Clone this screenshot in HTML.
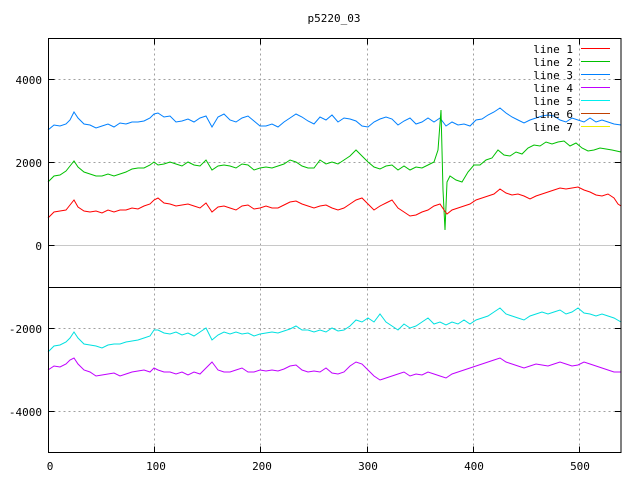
<!DOCTYPE html>
<html><head><meta charset="utf-8"><style>
html,body{margin:0;padding:0;background:#fff}
svg{display:block}
text{font-family:"DejaVu Sans Mono","Liberation Mono",monospace;font-size:11px;fill:#000}
</style></head><body>
<svg width="640" height="480" viewBox="0 0 640 480" xmlns="http://www.w3.org/2000/svg">
<rect width="640" height="480" fill="#fff"/>
<text x="334" y="22" text-anchor="middle">p5220_03</text>
<g stroke="#a0a0a0" stroke-width="1" stroke-dasharray="2,3" fill="none">
<path d="M48.5 79.5H621M48.5 162.5H621M48.5 328.5H621M48.5 411.5H621"/>
<path d="M154.5 38.5V452.5M260.5 38.5V452.5M367.5 38.5V452.5M473.5 38.5V452.5M579.5 38.5V452.5"/>
</g>
<path d="M48.5 245.5H621" stroke="#c8c8c8" stroke-width="1"/>
<path d="M48.5 287.5H621" stroke="#000" stroke-width="1"/>
<g fill="none" stroke-width="1">
<polyline stroke="#0080ff" points="48,130 54,125 60,126 66,124 70,120 74,112 78,118 84,124 90,125 96,128 102,126 108,124 114,127 120,123 126,124 132,122 138,122 144,121 150,118 154,114 158,113 164,117 170,116 176,122 182,121 188,119 194,122 200,118 206,116 212,127 218,117 224,114 230,120 236,122 242,118 248,116 254,121 260,126 266,126 272,124 278,127 284,122 290,118 296,114 302,117 308,121 314,124 320,117 326,120 332,115 338,122 344,118 350,119 356,121 362,126 368,127 374,122 380,119 386,117 392,119 398,125 404,121 410,118 416,124 422,122 428,118 434,122 440,118 446,126 452,122 458,125 464,124 470,126 476,120 482,119 488,115 494,112 500,108 506,113 512,117 518,120 524,123 530,120 536,118 542,116 548,115 554,116 560,120 566,122 572,118 578,120 584,122 590,118 596,122 602,120 608,122 614,124 621,125"/>
<polyline stroke="#00c000" points="48,182 54,176 60,175 66,171 70,166 74,161 78,167 84,172 90,174 96,176 102,176 108,174 114,176 120,174 126,172 132,169 138,168 144,168 150,165 154,162 158,165 164,164 170,162 176,164 182,166 188,162 194,165 200,166 206,160 212,170 218,166 224,165 230,166 236,168 242,164 248,165 254,170 260,168 266,167 272,168 278,166 284,164 290,160 296,162 302,166 308,168 314,168 320,160 326,164 332,162 338,164 344,160 350,156 356,150 362,156 368,162 374,167 380,169 386,166 392,165 398,170 404,166 410,170 416,167 422,168 428,165 434,162 438,150 441,110 443,190 445,230 447,182 450,176 456,180 462,182 468,172 474,165 480,165 486,160 492,158 498,150 504,155 510,156 516,152 522,154 528,148 534,145 540,146 546,142 552,144 558,142 564,141 570,146 576,143 582,148 588,151 594,150 600,148 606,149 612,150 621,152"/>
<polyline stroke="#ff0000" points="48,218 54,212 60,211 66,210 70,205 74,200 78,207 84,211 90,212 96,211 102,213 108,210 114,212 120,210 126,210 132,208 138,209 144,206 150,204 154,200 158,198 164,203 170,204 176,206 182,205 188,204 194,206 200,208 206,203 212,212 218,207 224,206 230,208 236,210 242,206 248,205 254,209 260,208 266,206 272,208 278,208 284,205 290,202 296,201 302,204 308,206 314,208 320,206 326,205 332,208 338,210 344,208 350,204 356,200 362,198 368,204 374,210 380,206 386,203 392,200 398,208 404,212 410,216 416,215 422,212 428,210 434,206 440,204 444,210 447,214 452,210 458,208 464,206 470,204 476,200 482,198 488,196 494,194 500,189 506,193 512,195 518,194 524,196 530,199 536,196 542,194 548,192 554,190 560,188 566,189 572,188 578,187 584,190 590,192 596,195 602,196 608,194 614,198 618,204 621,206"/>
<polyline stroke="#00e0e0" points="48,352 54,346 60,345 66,342 70,338 74,332 78,338 84,344 90,345 96,346 102,348 108,345 114,344 120,344 126,342 132,341 138,340 144,338 150,336 154,330 158,330 164,333 170,334 176,332 182,335 188,333 194,336 200,332 206,328 212,340 218,335 224,332 230,334 236,332 242,334 248,333 254,336 260,334 266,333 272,332 278,333 284,331 290,329 296,326 302,330 308,330 314,332 320,330 326,332 332,328 338,331 344,330 350,326 356,320 362,322 368,318 374,322 380,314 386,322 392,326 398,330 404,324 410,328 416,326 422,322 428,318 434,324 440,322 446,325 452,322 458,324 464,320 470,324 476,320 482,318 488,316 494,312 500,308 506,314 512,316 518,318 524,320 530,316 536,314 542,312 548,314 554,312 560,310 566,314 572,312 578,308 584,313 590,314 596,316 602,314 608,316 614,318 621,322"/>
<polyline stroke="#c000ff" points="48,370 54,366 60,367 66,364 70,360 74,358 78,364 84,370 90,372 96,376 102,375 108,374 114,373 120,376 126,374 132,372 138,371 144,370 150,372 154,368 158,370 164,372 170,372 176,374 182,372 188,375 194,372 200,374 206,368 212,362 218,370 224,372 230,372 236,370 242,368 248,372 254,372 260,370 266,371 272,370 278,371 284,369 290,366 296,365 302,370 308,372 314,371 320,372 326,368 332,373 338,374 344,372 350,366 356,362 362,364 368,370 374,376 380,380 386,378 392,376 398,374 404,372 410,376 416,374 422,375 428,372 434,374 440,376 446,378 452,374 458,372 464,370 470,368 476,366 482,364 488,362 494,360 500,358 506,362 512,364 518,366 524,368 530,366 536,364 542,365 548,366 554,364 560,362 566,364 572,366 578,365 584,362 590,364 596,366 602,368 608,370 614,372 621,372"/>
</g>
<rect x="48.5" y="38.5" width="572.5" height="414" fill="none" stroke="#000" stroke-width="1"/>
<g stroke="#000" stroke-width="1">
<path d="M48.5 79.5h6M48.5 162.5h6M48.5 245.5h6M48.5 328.5h6M48.5 411.5h6"/>
<path d="M621 79.5h-6M621 162.5h-6M621 245.5h-6M621 328.5h-6M621 411.5h-6"/>
<path d="M154.5 452.5v-6M260.5 452.5v-6M367.5 452.5v-6M473.5 452.5v-6M579.5 452.5v-6"/>
<path d="M154.5 38.5v6M260.5 38.5v6M367.5 38.5v6M473.5 38.5v6M579.5 38.5v6"/>
</g>
<g text-anchor="end">
<text x="42" y="84">4000</text>
<text x="42" y="167">2000</text>
<text x="42" y="250">0</text>
<text x="42" y="333">-2000</text>
<text x="42" y="416">-4000</text>
</g>
<g text-anchor="middle">
<text x="50" y="470">0</text>
<text x="156" y="470">100</text>
<text x="262" y="470">200</text>
<text x="368" y="470">300</text>
<text x="474" y="470">400</text>
<text x="580" y="470">500</text>
</g>
<g text-anchor="end">
<text x="573" y="53">line 1</text>
<text x="573" y="66">line 2</text>
<text x="573" y="79">line 3</text>
<text x="573" y="92">line 4</text>
<text x="573" y="105">line 5</text>
<text x="573" y="118">line 6</text>
<text x="573" y="131">line 7</text>
</g>
<g stroke-width="1">
<path d="M581 48.5h29" stroke="#ff0000"/>
<path d="M581 61.5h29" stroke="#00c000"/>
<path d="M581 74.5h29" stroke="#0080ff"/>
<path d="M581 87.5h29" stroke="#c000ff"/>
<path d="M581 100.5h29" stroke="#00eeee"/>
<path d="M581 113.5h29" stroke="#c04000"/>
<path d="M581 126.5h29" stroke="#eeee00"/>
</g>
</svg>
</body></html>
